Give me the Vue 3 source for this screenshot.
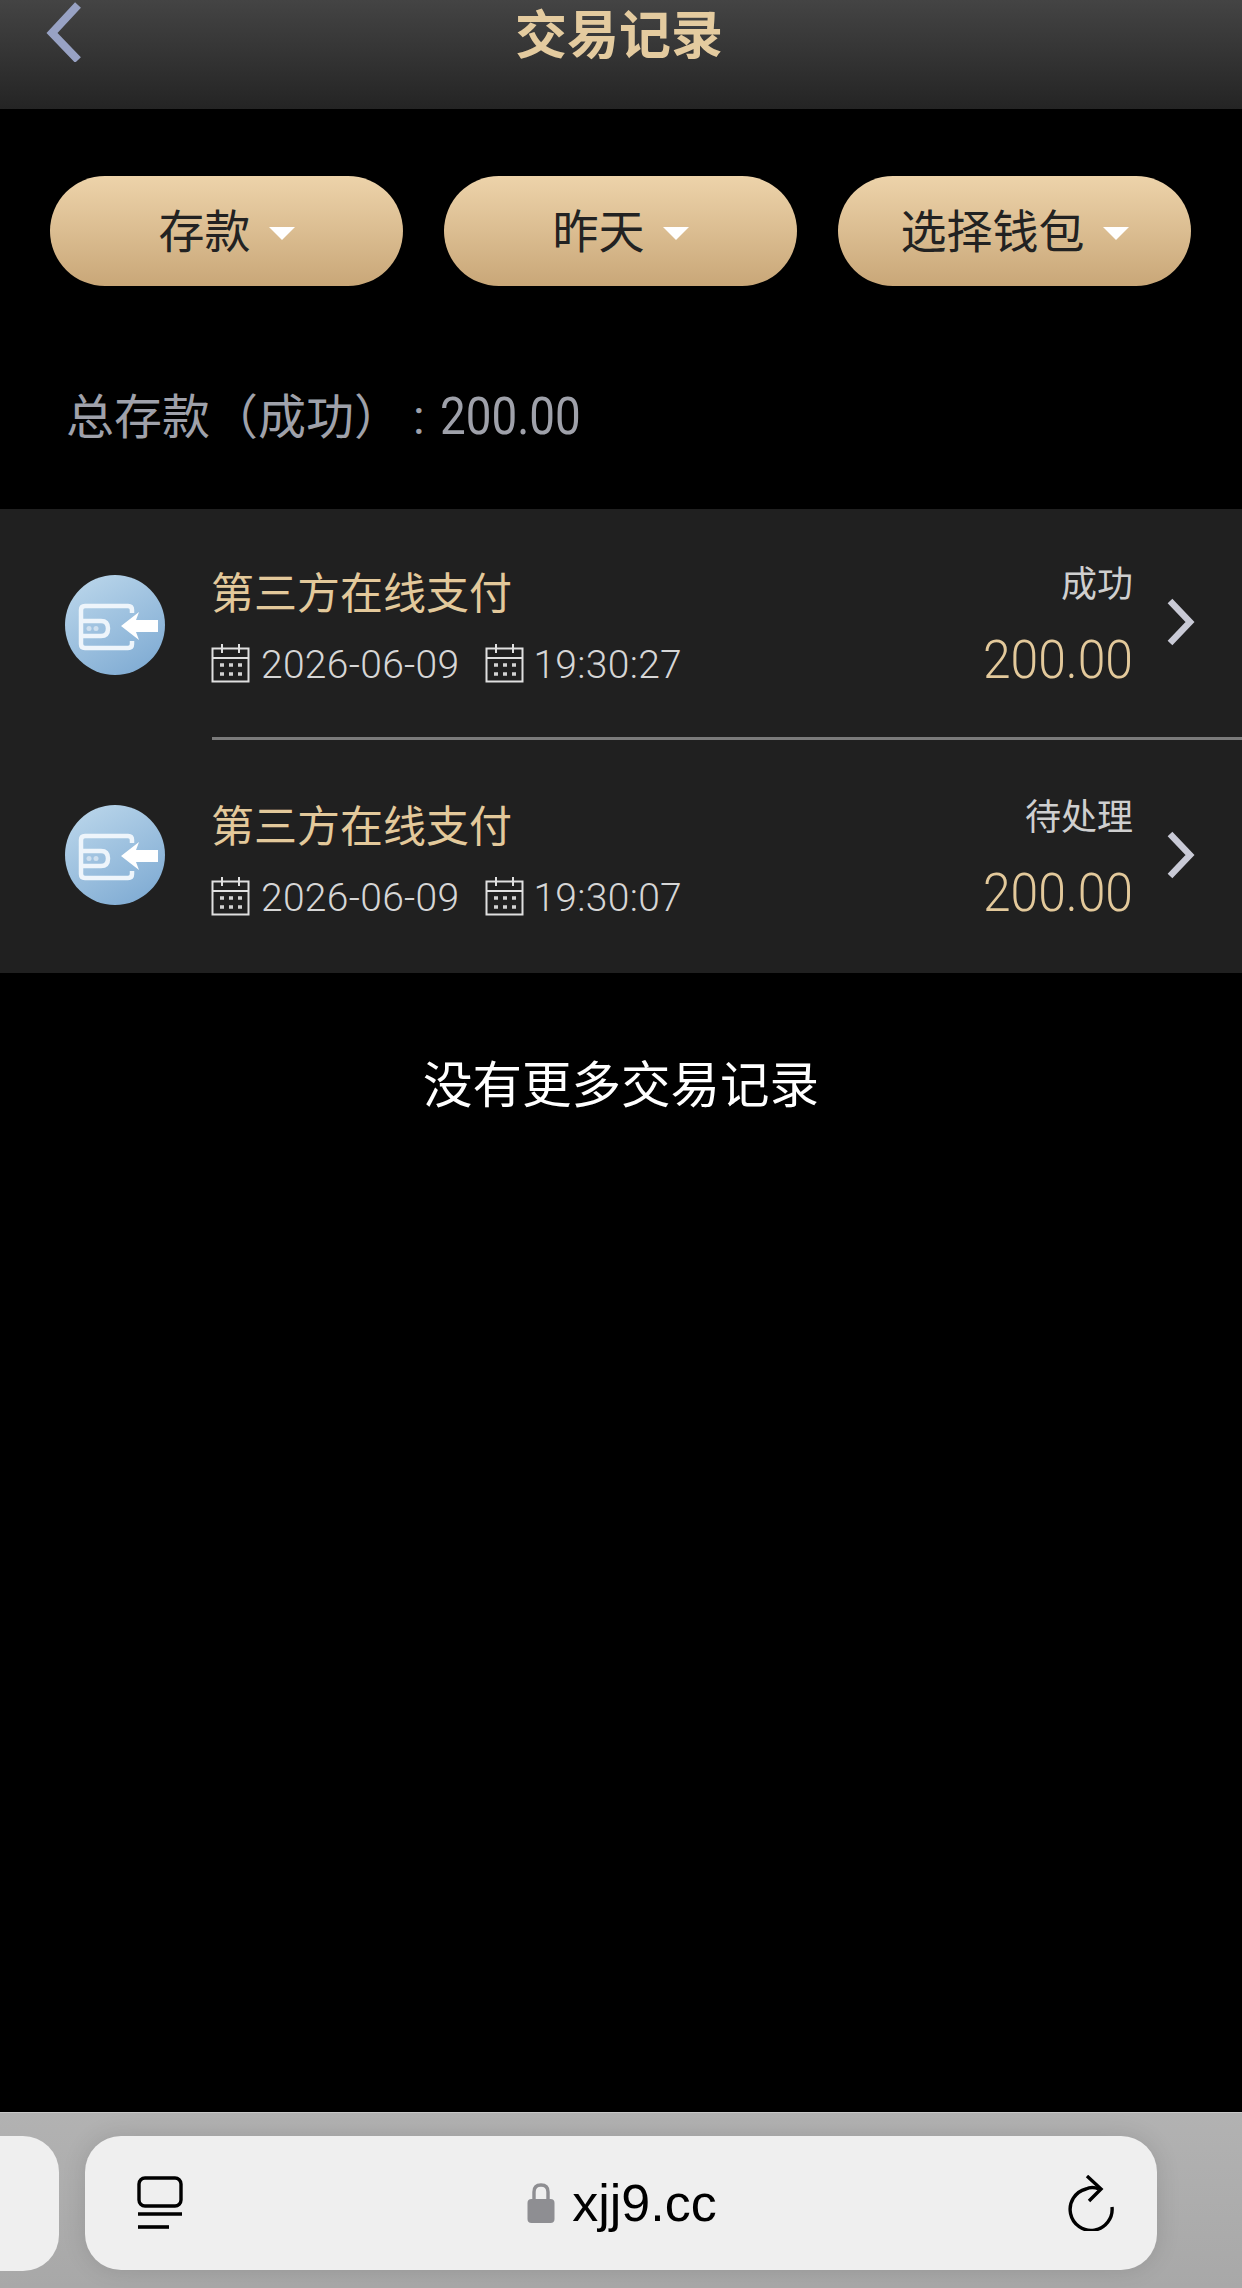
<template>
  <div class="page">
    <header class="top-bar">
      <svg class="back" viewBox="0 0 36 60" width="36" height="60">
        <path d="M32 3 L6 31 L32 58" fill="none" stroke="#98a2c4" stroke-width="8" />
      </svg>
      <h1 class="title">交易记录</h1>
    </header>

    <div class="filters">
      <button v-for="f in filters" :key="f" class="pill">
        <span class="pill-text">{{ f }}</span>
        <i class="caret"></i>
      </button>
    </div>

    <p class="summary">总存款（成功）<span class="colon">:</span><span class="total">200.00</span></p>

    <ul class="list">
      <li v-for="r in records" :key="r.time" class="row">
        <svg class="pay-icon" viewBox="0 0 100 100" width="100" height="100">
          <defs>
            <linearGradient :id="`g-${r.time}`" x1="0.2" y1="0" x2="0.8" y2="1">
              <stop offset="0" stop-color="#b9d5ea" />
              <stop offset="1" stop-color="#7fabd3" />
            </linearGradient>
          </defs>
          <circle cx="50" cy="50" r="50" :fill="`url(#g-${r.time})`" />
          <path d="M67 38 V35 Q67 31 63 31 H20 Q16 31 16 35 V69 Q16 73 20 73 H63 Q67 73 67 69 V66" fill="none" stroke="#eef5fb" stroke-width="4.5" />
          <path d="M16 46 H36 Q43 46 43 53.5 Q43 61 36 61 H16" fill="none" stroke="#eef5fb" stroke-width="4.5" />
          <circle cx="24" cy="53.5" r="2.5" fill="#cfe0ef" />
          <circle cx="31" cy="53.5" r="2.5" fill="#cfe0ef" />
          <path d="M56 51 L74 37 L71 45 H93 V57 H71 L74 65 Z" fill="#fff" />
        </svg>

        <div class="main">
          <div class="name">{{ r.name }}</div>
          <div class="when">
            <svg v-for="(part, i) in [r.date, r.time]" :key="part" class="cal-wrap" viewBox="0 0 40 40" width="40" height="40" :style="{ order: i * 2 }">
              <rect x="1.5" y="5.5" width="36" height="33" fill="none" stroke="#e0e0e0" stroke-width="2" />
              <path d="M1.5 15 H37.5" stroke="#e0e0e0" stroke-width="2" />
              <path d="M11 1 V10 M28 1 V10" stroke="#e0e0e0" stroke-width="2" />
              <path d="M9 22 H13 M18 22 H22 M27 22 H31 M9 31 H13 M18 31 H22 M27 31 H31" stroke="#d2d2d2" stroke-width="3.4" />
            </svg>
            <span class="stamp date">{{ r.date }}</span>
            <span class="stamp time">{{ r.time }}</span>
          </div>
        </div>

        <div class="side">
          <div class="status">{{ r.status }}</div>
          <div class="amount">200.00</div>
        </div>

        <svg class="more" viewBox="0 0 30 50" width="30" height="50">
          <path d="M5 4 L25 25 L5 46" fill="none" stroke="#c9cad6" stroke-width="6.5" />
        </svg>
      </li>
    </ul>

    <p class="end">没有更多交易记录</p>

    <footer class="browser-bar">
      <div class="tab-prev"></div>
      <div class="address">
        <svg class="tabs-icon" viewBox="0 0 46 54" width="46" height="54">
          <rect x="2" y="2" width="42" height="28" rx="6" fill="none" stroke="#000" stroke-width="3.4" />
          <path d="M1 38 H45" stroke="#000" stroke-width="3.6" />
          <path d="M1 51 H32" stroke="#000" stroke-width="3.6" />
        </svg>
        <div class="url">
          <svg viewBox="0 0 28 40" width="28" height="40">
            <path d="M7 18 V9 Q7 2 14 2 Q21 2 21 9 V18" fill="none" stroke="#8e8e92" stroke-width="3.4" />
            <rect x="0.5" y="16" width="27" height="24" rx="4" fill="#8e8e92" />
          </svg>
          <span>xjj9.cc</span>
        </div>
        <svg class="reload" viewBox="0 0 46 56" width="46" height="56">
          <path d="M31 14 Q24 11 18 14 A21 21 0 1 0 44 32" fill="none" stroke="#000" stroke-width="3.4" />
          <path d="M19 1 L33 14 L21 26" fill="none" stroke="#000" stroke-width="3.4" />
        </svg>
      </div>
    </footer>
  </div>
</template>

<script setup>
const filters = ['存款', '昨天', '选择钱包']

const records = [
  { name: '第三方在线支付', date: '2026-06-09', time: '19:30:27', status: '成功' },
  { name: '第三方在线支付', date: '2026-06-09', time: '19:30:07', status: '待处理' }
]
</script>

<style>
html,
body {
  margin: 0;
  background: #000;
}
</style>

<style scoped>
.page {
  display: flex;
  flex-direction: column;
  width: 1242px;
  height: 2288px;
  overflow: hidden;
  background: #000;
  font-family: Roboto, "Noto Sans CJK SC", sans-serif;
}

.top-bar {
  display: flex;
  justify-content: center;
  position: relative;
  height: 109px;
  flex: none;
  background: linear-gradient(#444, #242424);
}

.back {
  position: absolute;
  left: 46px;
  top: 2px;
}

.title {
  margin: 7px 4px 0 0;
  font-size: 52px;
  line-height: 60px;
  font-weight: 700;
  color: #e4cb9f;
}

.filters {
  display: flex;
  gap: 41px;
  padding: 67px 51px 0 50px;
}

.pill {
  display: flex;
  align-items: center;
  justify-content: center;
  gap: 18px;
  flex: 1;
  height: 110px;
  padding: 0;
  border: 0;
  border-radius: 55px;
  background: linear-gradient(#edd3aa, #c9a778);
  color: #222;
  font-family: inherit;
  font-size: 46px;
}

.pill-text {
  margin-bottom: 7px;
}

.caret {
  width: 0;
  height: 0;
  margin-top: 4px;
  border-left: 13px solid transparent;
  border-right: 13px solid transparent;
  border-top: 13px solid #fff;
}

.summary {
  margin: 0;
  padding: 98px 0 0 66px;
  font-size: 48px;
  line-height: 66px;
  font-weight: 400;
  color: #9fa1aa;
}

.colon {
  margin: 0 15px 0 11px;
}

.total {
  display: inline-block;
  font-size: 52px;
  transform: scaleX(0.88);
  transform-origin: left center;
}

.list {
  margin: 58px 0 0;
  padding: 0;
  list-style: none;
  background: #202020;
}

.row {
  display: flex;
  position: relative;
  height: 230px;
  padding: 66px 47px 0 65px;
  box-sizing: border-box;
}

.row + .row {
  height: 234px;
  padding-top: 69px;
}

.row + .row .pay-icon {
  margin-top: -3px;
}

.row + .row::before {
  content: "";
  position: absolute;
  left: 212px;
  right: 0;
  top: -2px;
  height: 3px;
  background: #7b7b7b;
}

.pay-icon {
  flex: none;
}

.main {
  margin-left: 46px;
  margin-top: -11px;
  flex: 1;
}

.name {
  font-size: 43px;
  line-height: 60px;
  font-weight: 400;
  color: #e3c99b;
}

.when {
  display: flex;
  align-items: center;
  margin-top: 19px;
  height: 44px;
}

.cal-wrap {
  flex: none;
  margin-bottom: 5px;
}

.stamp {
  font-size: 39px;
  font-weight: 300;
  letter-spacing: 0.3px;
  color: #d6d6d6;
}

.date {
  order: 1;
  margin: 0 26px 0 10px;
}

.time {
  order: 3;
  margin-left: 8px;
}

.side {
  width: 200px;
  margin-top: -15px;
  text-align: right;
}

.status {
  font-size: 36px;
  line-height: 50px;
  font-weight: 400;
  color: #cfcfcf;
}

.amount {
  margin-top: 20px;
  font-size: 53px;
  line-height: 60px;
  font-weight: 300;
  color: #e3c99b;
  transform: scaleX(0.94);
  transform-origin: right center;
}

.more {
  flex: none;
  margin: 22px 0 0 32px;
}

.end {
  margin: 0;
  padding-top: 78px;
  text-align: center;
  font-size: 49.5px;
  line-height: 70px;
  font-weight: 400;
  color: #fff;
}

.browser-bar {
  display: flex;
  gap: 26px;
  height: 176px;
  margin-top: auto;
  padding-top: 23px;
  box-sizing: border-box;
  background: linear-gradient(#b2b2b2, #a8a8a8);
  border-top: 1px solid #c8c8c8;
}

.tab-prev {
  width: 59px;
  height: 135px;
  flex: none;
  border-radius: 0 36px 36px 0;
  background: #efefef;
}

.address {
  display: flex;
  align-items: center;
  justify-content: space-between;
  position: relative;
  width: 1072px;
  height: 134px;
  padding: 0 43px 0 52px;
  box-sizing: border-box;
  border-radius: 36px;
  background: #efefef;
  box-shadow: 0 0 24px rgba(0, 0, 0, 0.12);
}

.url {
  display: flex;
  align-items: center;
  gap: 17px;
  margin-right: 7px;
  font-family: "Liberation Sans", Arial, sans-serif;
  font-size: 52px;
  color: #000;
}
</style>
